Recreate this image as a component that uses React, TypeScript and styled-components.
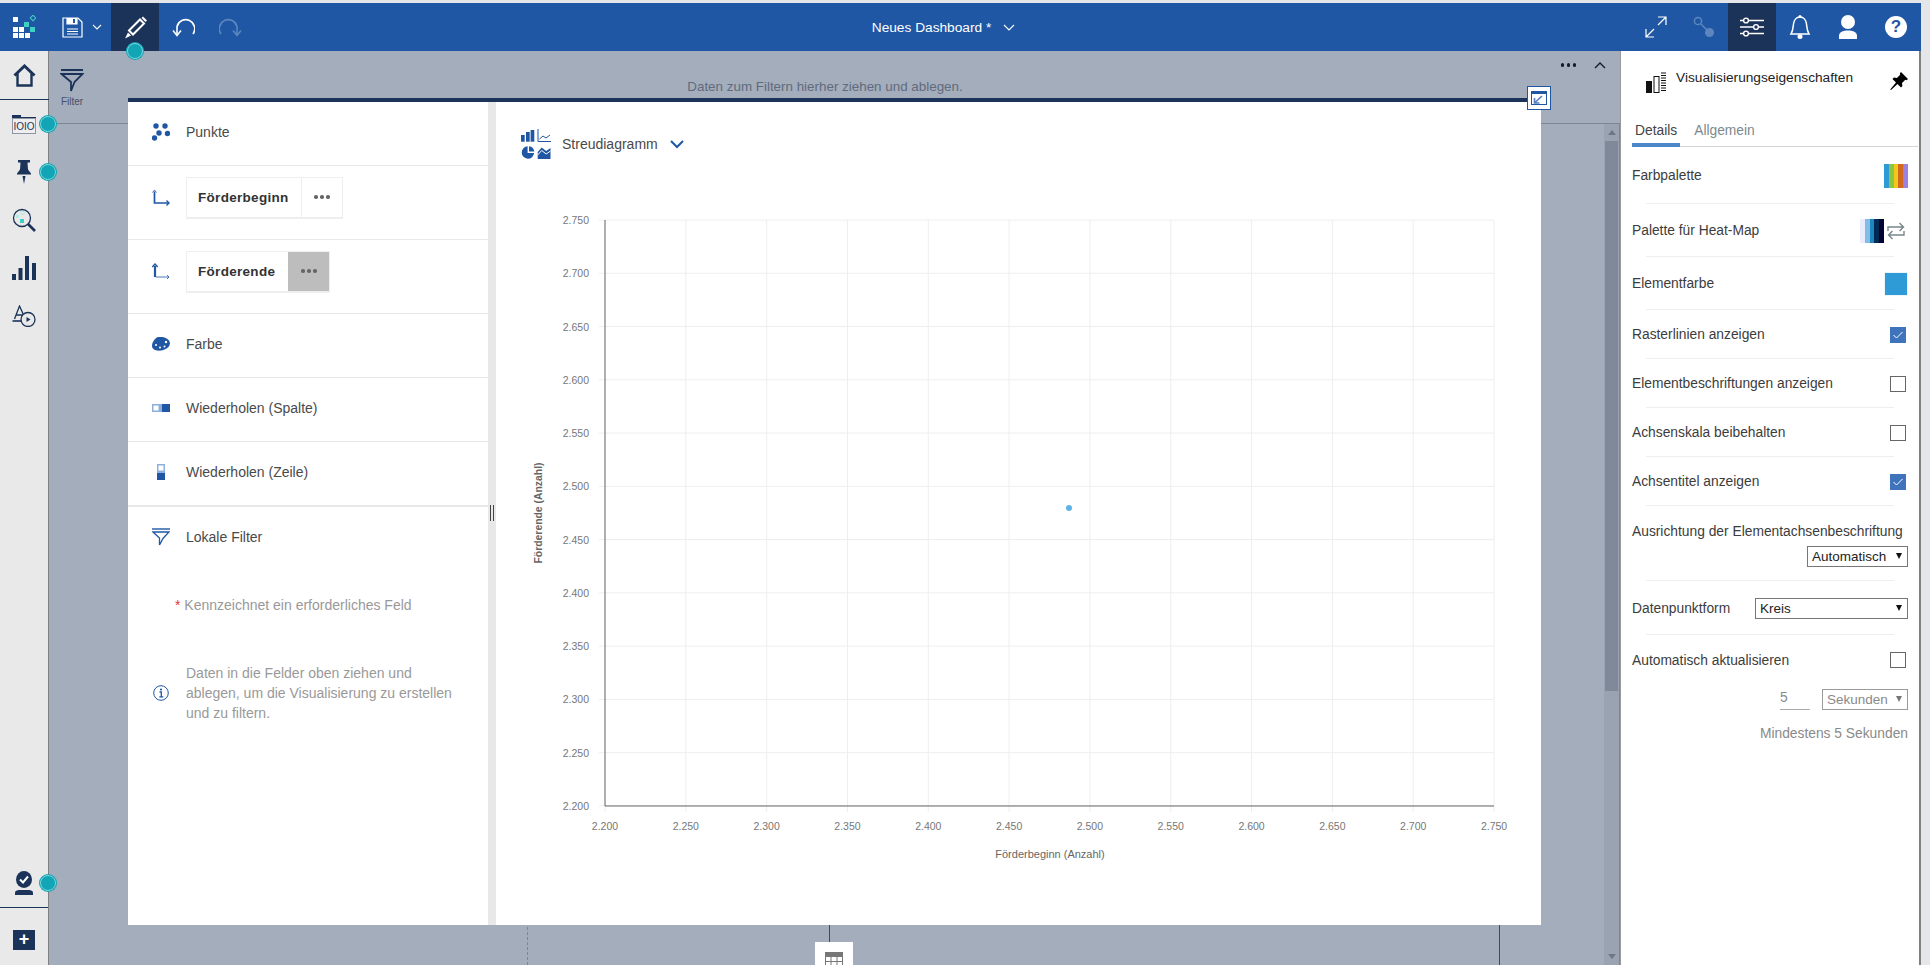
import React from 'react';
import styled, { createGlobalStyle } from 'styled-components';

const GlobalStyle = createGlobalStyle`
  html, body {
    margin: 0;
    padding: 0;
    height: 100%;
    overflow: hidden;
    background: #e9e9e9;
    font-family: 'Liberation Sans', Arial, sans-serif;
  }
  * { box-sizing: border-box; }
`;

const xTicks = ['2.200', '2.250', '2.300', '2.350', '2.400', '2.450', '2.500', '2.550', '2.600', '2.650', '2.700', '2.750'];
const yTicks = [...xTicks].reverse();

const checks = [
  { label: 'Rasterlinien anzeigen', checked: true },
  { label: 'Elementbeschriftungen anzeigen', checked: false },
  { label: 'Achsenskala beibehalten', checked: false },
  { label: 'Achsentitel anzeigen', checked: true },
];

const Chart = () => {
  const left = 109;
  const top = 34;
  const stepX = 80.82;
  const stepY = 53.27;
  const right = left + stepX * 11;
  const bottom = top + stepY * 11;
  return (
    <svg width="1045" height="684" viewBox="0 0 1045 684">
      {xTicks.map((t, i) => (
        <g key={t}>
          <line x1={left + stepX * i} x2={left + stepX * i} y1={top} y2={bottom + 6} stroke="#eeeeee" />
          <text x={left + stepX * i} y={bottom + 24} textAnchor="middle" fontSize="10.5" fill="#777">{t}</text>
        </g>
      ))}
      {yTicks.map((t, i) => (
        <g key={t}>
          <line x1={left - 6} x2={right} y1={top + stepY * i} y2={top + stepY * i} stroke="#eeeeee" />
          <text x={left - 16} y={top + stepY * i + 4} textAnchor="end" fontSize="10.5" fill="#777">{t}</text>
        </g>
      ))}
      <path d={`M${left} ${top}V${bottom}H${right}`} fill="none" stroke="#666" strokeWidth="1" />
      <circle cx="573" cy="322" r="3" fill="#5db4e6" />
      <text x="554" y="672" textAnchor="middle" fontSize="11" fill="#666">Förderbeginn (Anzahl)</text>
      <text transform="translate(46 327) rotate(-90)" textAnchor="middle" fontSize="10.4" fontWeight="700" fill="#666">Förderende (Anzahl)</text>
    </svg>
  );
};

const App = () => {
  return (
    <Page>
      <GlobalStyle />
      <Header>
        <HeaderGroup>
          <HeaderButton>
            <svg width="24" height="24" viewBox="0 0 24 24">
              <g fill="#fff"><rect x="1" y="2" width="5" height="5" /><rect x="1" y="12" width="5" height="5" /><rect x="7" y="12" width="5" height="5" /><rect x="1" y="18" width="5" height="5" /><rect x="7" y="18" width="5" height="5" /><rect x="13" y="18" width="5" height="5" /></g>
              <g fill="#3fd0c4"><rect x="12" y="7" width="5" height="5" /><rect x="18" y="12" width="5" height="5" /></g>
              <rect x="19" y="1" width="4" height="4" transform="rotate(45 21 3)" fill="none" stroke="#3fd0c4" />
            </svg>
          </HeaderButton>
          <SaveButton>
            <svg width="21" height="21" viewBox="0 0 21 21" fill="none" stroke="#fff" strokeWidth="1.2">
              <path d="M1 1h15l4 4v15H1z" />
              <path d="M5 1v6h10V1" fill="#fff" />
              <path d="M12 2v4" stroke="#1f57a4" strokeWidth="2" />
              <path d="M5 12h11M5 14.5h11M5 17h11" />
            </svg>
            <svg width="10" height="6" viewBox="0 0 10 6" fill="none" stroke="#fff" strokeWidth="1.1"><path d="M1 1l4 4 4-4" /></svg>
          </SaveButton>
          <HeaderButton $active>
            <svg width="26" height="26" viewBox="0 0 26 26" fill="#fff">
              <path d="M7 16.500L18 5.500l4 4L11 20.500z" fill="none" stroke="#fff" strokeWidth="2" />
              <path d="M19.500 4l1.500-1.500 4 4L23.500 8z" />
              <path d="M6 18.500l-3 6 6-3z" />
            </svg>
            <Dot $place="edit" />
          </HeaderButton>
          <HeaderButton>
            <svg width="24" height="24" viewBox="0 0 24 24" fill="none" stroke="#fff" strokeWidth="1.6">
              <path d="M22 19A9 9 0 1 0 6 11.5V20" />
              <path d="M2 15.5L6 20.5l4-5" />
            </svg>
          </HeaderButton>
          <HeaderButton>
            <svg width="24" height="24" viewBox="0 0 24 24" fill="none" stroke="#5d86bf" strokeWidth="1.6">
              <path d="M2 19A9 9 0 1 1 18 11.5V20" />
              <path d="M22 15.5L18 20.5l-4-5" />
            </svg>
          </HeaderButton>
        </HeaderGroup>
        <DashboardTitle>
          Neues Dashboard *
          <svg width="12" height="7" viewBox="0 0 12 7" fill="none" stroke="#fff" strokeWidth="1.2"><path d="M1 1l5 5 5-5" /></svg>
        </DashboardTitle>
        <HeaderGroupRight>
          <HeaderButton>
            <svg width="24" height="24" viewBox="0 0 24 24" fill="none" stroke="#fff" strokeWidth="1.2">
              <path d="M2 22L22 2M14 2h8v8M2 14v8h8" />
              <path d="M10 14l4-4" stroke="#1f57a4" strokeWidth="3" />
            </svg>
          </HeaderButton>
          <HeaderButton>
            <svg width="22" height="22" viewBox="0 0 22 22" fill="none" stroke="#5d86bf" strokeWidth="1.5">
              <circle cx="5" cy="5" r="3.6" />
              <path d="M8 8l6 6" />
              <circle cx="16.5" cy="16.5" r="3.8" fill="#5d86bf" />
            </svg>
          </HeaderButton>
          <HeaderButton $active>
            <svg width="24" height="20" viewBox="0 0 24 20" fill="none" stroke="#fff" strokeWidth="1.4">
              <path d="M0 3.5h24M0 10h24M0 16.500h24" />
              <g fill="#1c3359"><circle cx="6" cy="3.500" r="2.400" /><circle cx="16" cy="10" r="2.400" /><circle cx="6" cy="16.500" r="2.400" /></g>
            </svg>
          </HeaderButton>
          <HeaderButton>
            <svg width="22" height="26" viewBox="0 0 22 26" fill="none" stroke="#fff" strokeWidth="1.5">
              <path d="M2 20c2-3 2-6 2.500-10C5 6 7.500 3 11 3s6 3 6.500 7c.5 4 .5 7 2.500 10z" />
              <circle cx="11" cy="2.500" r="1.500" fill="#fff" stroke="none" />
              <circle cx="11" cy="22.500" r="2.500" fill="#fff" stroke="none" />
            </svg>
          </HeaderButton>
          <HeaderButton>
            <svg width="20" height="24" viewBox="0 0 20 24" fill="#fff">
              <circle cx="10" cy="7" r="7" />
              <path d="M1 24v-3c0-4 4-5.500 9-5.500s9 1.500 9 5.500v3z" />
            </svg>
          </HeaderButton>
          <HeaderButton>
            <HelpBadge>?</HelpBadge>
          </HeaderButton>
        </HeaderGroupRight>
      </Header>

      <Body>
        <Rail>
          <RailHome>
            <svg width="23" height="23" viewBox="0 0 23 23" fill="none" stroke="#1c3359" strokeWidth="3">
              <path d="M1.500 11.500L11.500 2l10 9.500" />
              <path d="M4.500 9.500v12h14v-12" strokeWidth="2.400" />
            </svg>
          </RailHome>
          <RailItem>
            <svg width="24" height="19" viewBox="0 0 24 19">
              <path d="M0 0h9v2h15v4H0z" fill="#1c3359" />
              <rect x="0.500" y="3.500" width="23" height="15" fill="#eee" stroke="#8d97a7" />
              <text x="12" y="15" fontSize="10" textAnchor="middle" fill="#1c3359">IOIO</text>
            </svg>
            <Dot $place="rail" />
          </RailItem>
          <RailItem>
            <svg width="16" height="24" viewBox="0 0 16 24" fill="#1c3359">
              <path d="M2 0h12v2.500h-2.500l.5 7 3 4v1H1v-1l3-4 .5-7H2z" />
              <path d="M6.500 16h3L8 24z" />
            </svg>
            <Dot $place="rail" />
          </RailItem>
          <RailItem>
            <svg width="24" height="24" viewBox="0 0 24 24" fill="none">
              <circle cx="10" cy="10" r="8.500" stroke="#1c3359" strokeWidth="1.300" />
              <path d="M16 16l7 7" stroke="#1c3359" strokeWidth="2.600" />
              <rect x="8" y="11" width="4" height="4" fill="#3fd0c4" />
              <rect x="4" y="7" width="3" height="3" fill="#b6e8e2" />
              <rect x="9" y="3.500" width="3" height="3" fill="none" stroke="#b6e8e2" />
            </svg>
          </RailItem>
          <RailItem>
            <svg width="24" height="24" viewBox="0 0 24 24" fill="#1c3359">
              <rect x="0" y="18" width="4" height="6" /><rect x="6.500" y="12" width="4" height="12" /><rect x="13" y="0" width="4" height="24" /><rect x="20" y="7" width="4" height="17" />
            </svg>
          </RailItem>
          <RailItem>
            <svg width="24" height="22" viewBox="0 0 24 22" fill="none" stroke="#1c3359" strokeWidth="1.300">
              <path d="M2.500 14L7.500 1l5 11M4.500 10h6" />
              <path d="M0.500 16h10" strokeWidth="1.600" />
              <circle cx="16" cy="14.500" r="7" fill="#e9e9e9" />
              <path d="M14.500 12l4 2.500-4 2.500z" fill="#1c3359" stroke="none" />
            </svg>
          </RailItem>
          <RailBottom>
            <RailCheck>
              <svg width="18" height="24" viewBox="0 0 18 24">
                <ellipse cx="9" cy="8.500" rx="8" ry="8.500" fill="#1c3359" />
                <path d="M5 8.500l3 3 5-6" fill="none" stroke="#fff" strokeWidth="2" />
                <path d="M0 24v-2.500C0 20 2 19 4 19h10c2 0 4 1 4 2.500V24z" fill="#1c3359" />
              </svg>
              <Dot $place="rail" />
            </RailCheck>
            <RailAdd>+</RailAdd>
          </RailBottom>
        </Rail>

        <Canvas>
          <FilterBar>
            <FilterTile>
              <svg width="24" height="23" viewBox="0 0 24 23" fill="none" stroke="#1c3359">
                <path d="M1 1h22" strokeWidth="2" />
                <path d="M1.500 5h21L14.500 13 11 22v-9z" strokeWidth="1.800" />
              </svg>
              Filter
            </FilterTile>
            <DropHint>Daten zum Filtern hierher ziehen und ablegen.</DropHint>
            <BarActions>
              <Dots $color="#111c30" />
              <svg width="12" height="7" viewBox="0 0 12 7" fill="none" stroke="#111c30" strokeWidth="1.400"><path d="M1 6l5-5 5 5" /></svg>
            </BarActions>
          </FilterBar>

          <WorkArea>
            <Sheet>
              <DashedGuide />
              <BlueGuide $left={780} />
              <BlueGuide $left={1450} />
              <TableTile>
                <svg width="18" height="20" viewBox="0 0 18 20" fill="none" stroke="#777">
                  <rect x="0.500" y="0.500" width="17" height="19" />
                  <rect x="0.500" y="0.500" width="17" height="4" fill="#777" />
                  <path d="M6 4v16M12 4v16M0 9.500h18M0 14.500h18" />
                </svg>
              </TableTile>
            </Sheet>
            <ScrollBar>
              <ScrollArrow $up />
              <ScrollThumb />
              <ScrollArrow />
            </ScrollBar>
          </WorkArea>

          <Card>
            <ConfigPanel>
              <SlotRow $height={64}>
                <SlotIcon>
                  <svg width="18" height="18" viewBox="0 0 18 18" fill="#1f57a4">
                    <circle cx="4" cy="3" r="2.700" /><circle cx="13" cy="3" r="2.700" /><circle cx="7" cy="10" r="2.700" /><circle cx="15.500" cy="10.500" r="2.700" /><circle cx="2.500" cy="15" r="2.700" />
                  </svg>
                </SlotIcon>
                Punkte
              </SlotRow>
              <SlotRow $height={74} $lift={10}>
                <SlotIcon>
                  <svg width="18" height="18" viewBox="0 0 18 18" fill="none" stroke="#1f57a4">
                    <path d="M2.500 2.500V14H17" strokeWidth="1.700" />
                    <path d="M.5 3.500l2-2.500 2 2.500" strokeWidth="0.800" />
                    <path d="M14.500 11.500L17 14l-2.500 2.500" strokeWidth="1.400" />
                  </svg>
                </SlotIcon>
                <FieldPill>
                  <FieldName $width={114}>Förderbeginn</FieldName>
                  <FieldMenu><Dots $color="#666" /></FieldMenu>
                </FieldPill>
              </SlotRow>
              <SlotRow $height={74} $lift={10}>
                <SlotIcon>
                  <svg width="18" height="18" viewBox="0 0 18 18" fill="none" stroke="#1f57a4">
                    <path d="M3 3v11" strokeWidth="2.200" />
                    <path d="M3.500 14H17" strokeWidth="0.800" />
                    <path d="M.3 4L3 1l2.700 3" strokeWidth="1.400" />
                    <path d="M15 12l2 2-2 2" strokeWidth="0.800" />
                  </svg>
                </SlotIcon>
                <FieldPill>
                  <FieldName $width={101}>Förderende</FieldName>
                  <FieldMenu $hovered><Dots $color="#666" /></FieldMenu>
                </FieldPill>
              </SlotRow>
              <SlotRow $height={64}>
                <SlotIcon>
                  <svg width="18" height="14" viewBox="0 0 18 14">
                    <path d="M6 0c4-.5 8 .5 10.500 3 2 2 1.800 5-.5 7.500-2.500 2.500-7 3.500-11 3-3-.4-5-2-5-4.500C0 5 3 1 6 0z" fill="#1f57a4" />
                    <g fill="#fff"><circle cx="4" cy="8" r="1" /><circle cx="8" cy="10.500" r="1" /><circle cx="12.500" cy="9.500" r="1" /><circle cx="14" cy="5" r="1.200" /></g>
                  </svg>
                </SlotIcon>
                Farbe
              </SlotRow>
              <SlotRow $height={64}>
                <SlotIcon>
                  <svg width="18" height="8" viewBox="0 0 18 8">
                    <rect width="18" height="8" fill="#8fb0dc" />
                    <rect x="1.500" y="1.500" width="5" height="5" fill="#fff" />
                    <rect x="10" y="0" width="8" height="8" fill="#1f57a4" />
                  </svg>
                </SlotIcon>
                Wiederholen (Spalte)
              </SlotRow>
              <SlotRow $height={65} $heavy>
                <SlotIcon>
                  <svg width="8" height="16" viewBox="0 0 8 16">
                    <rect width="8" height="16" fill="#8fb0dc" />
                    <rect x="1.500" y="1.500" width="5" height="5" fill="#fff" />
                    <rect y="9" width="8" height="7" fill="#1f57a4" />
                  </svg>
                </SlotIcon>
                Wiederholen (Zeile)
              </SlotRow>
              <FilterRow>
                <SlotIcon>
                  <svg width="18" height="18" viewBox="0 0 18 18" fill="none" stroke="#1f57a4">
                    <path d="M0 1h18" strokeWidth="1.400" />
                    <path d="M1 4h16l-6 6.500L7.500 17v-7z" strokeWidth="1.300" />
                  </svg>
                </SlotIcon>
                Lokale Filter
              </FilterRow>
              <RequiredNote><b>*</b> Kennzeichnet ein erforderliches Feld</RequiredNote>
              <InfoNote>
                <SlotIcon>
                  <svg width="16" height="16" viewBox="0 0 16 16" fill="none" stroke="#1f57a4">
                    <circle cx="8" cy="8" r="7.300" />
                    <path d="M6.500 7H8.300v4.500M6.300 11.800h4" strokeWidth="1.300" />
                    <circle cx="8" cy="4.500" r="1.100" fill="#1f57a4" stroke="none" />
                  </svg>
                </SlotIcon>
                <span>Daten in die Felder oben ziehen und ablegen, um die Visualisierung zu erstellen und zu filtern.</span>
              </InfoNote>
            </ConfigPanel>
            <Gutter><GutterGrip /></Gutter>
            <ChartPanel>
              <ChartTypeBar>
                <svg width="30" height="30" viewBox="0 0 30 30">
                  <g fill="#1f57a4">
                    <rect x="0" y="6" width="3.700" height="6.700" /><rect x="5" y="3" width="3.700" height="9.700" /><rect x="9.600" y="1" width="3.700" height="11.700" />
                    <path d="M6.600 17.300v6.700h6.500A6.200 6.200 0 1 1 6.600 17.300z" /><path d="M8 17.300A6.200 6.200 0 0 1 13.300 22.500H8z" />
                    <path d="M16.700 23l4-4.500 4.500 3.500 4.300-3V30H16.700z" />
                  </g>
                  <path d="M17 0v12.500h13M18.500 10l3.500-3 3 2 4-3" fill="none" stroke="#1f57a4" strokeWidth="1" />
                  <path d="M16.700 26l4-4.500 4.500 3.500 4.300-3" fill="none" stroke="#fff" strokeWidth="1" />
                </svg>
                <ChartTypeName>Streudiagramm</ChartTypeName>
                <svg width="14" height="9" viewBox="0 0 14 9" fill="none" stroke="#1f57a4" strokeWidth="2"><path d="M1 1l6 6 6-6" /></svg>
              </ChartTypeBar>
              <Chart />
            </ChartPanel>
          </Card>

          <RestoreButton>
            <svg width="16" height="14" viewBox="0 0 16 14">
              <rect x="0.500" y="0.500" width="15" height="13" fill="#fff" stroke="#1f57a4" />
              <rect width="16" height="3" fill="#1f57a4" />
              <path d="M11 5L4 11.500M3.500 7v5h5" fill="none" stroke="#4f7fc0" strokeWidth="1.600" />
            </svg>
          </RestoreButton>
        </Canvas>

        <Properties>
          <PropertiesHead>
            <svg width="20" height="21" viewBox="0 0 20 21">
              <rect x="0" y="9" width="6" height="12" fill="#111" />
              <rect x="8" y="4.500" width="5" height="16" fill="none" stroke="#111" />
              <path d="M15 1h5M15 3.500h5M15 6h5M15 8.500h5M15 11h5M15 13.500h5M15 16h5M15 18.500h5" stroke="#111" />
            </svg>
            <PropertiesTitle>Visualisierungseigenschaften</PropertiesTitle>
            <svg width="18" height="18" viewBox="0 0 18 18" fill="#000">
              <path d="M11 0l7 7-1.500 1.200-1.200-.4-3.300 3.300.4 3L11 15.500 7.500 12 1 18l-.8-.6L6 10.500 2.500 7l1.400-1.400 3 .4L10.200 2.700 9.800 1.500z" />
            </svg>
          </PropertiesHead>
          <Tabs>
            <Tab $active>Details</Tab>
            <Tab>Allgemein</Tab>
          </Tabs>
          <PropRow $height={57}>
            Farbpalette
            <Swatches>
              {['#2f9bd6', '#8cc63f', '#f2c81e', '#d2691e', '#9b82e0'].map((c) => <Stripe key={c} $color={c} />)}
            </Swatches>
          </PropRow>
          <PropRow $height={53}>
            Palette für Heat-Map
            <HeatGroup>
              <Swatches>
                {['#e8ecfb', '#82bde9', '#1e87c0', '#012a55', '#000433'].map((c) => <Stripe key={c} $color={c} />)}
              </Swatches>
              <svg width="18" height="18" viewBox="0 0 18 18" fill="none" stroke="#78868a" strokeWidth="1.400">
                <path d="M1 9V5h15M12.500 1L16.500 5l-4 4" />
                <path d="M17 9v4H2M5.500 9L1.500 13l4 4" />
              </svg>
            </HeatGroup>
          </PropRow>
          <PropRow $height={53}>
            Elementfarbe
            <ColorBox />
          </PropRow>
          {checks.map((c) => (
            <PropRow key={c.label} $height={49}>
              {c.label}
              <CheckBox $checked={c.checked}>
                {c.checked && (
                  <svg width="10" height="8" viewBox="0 0 10 8" fill="none" stroke="#fff"><path d="M.5 4l3 3L9.500 1" /></svg>
                )}
              </CheckBox>
            </PropRow>
          ))}
          <StackedRow $height={75}>
            Ausrichtung der Elementachsenbeschriftung
            <SelectBox $width={101}>Automatisch</SelectBox>
          </StackedRow>
          <PropRow $height={54}>
            Datenpunktform
            <SelectBox $width={153}>Kreis</SelectBox>
          </PropRow>
          <AutoRow $height={50}>
            Automatisch aktualisieren
            <CheckBox />
          </AutoRow>
          <IntervalRow>
            <IntervalInput>5</IntervalInput>
            <SelectBox $width={86} $muted>Sekunden</SelectBox>
          </IntervalRow>
          <MinNote>Mindestens 5 Sekunden</MinNote>
        </Properties>
      </Body>
    </Page>
  );
};

export default App;

const Page = styled.div`
  height: 100vh;
  padding: 3px 9px 0 0;
  display: flex;
  flex-direction: column;
  background: #e4e6ea;
  overflow: hidden;
`;

const Header = styled.header`
  height: 48px;
  flex: none;
  display: grid;
  grid-template-columns: 1fr auto 1fr;
  align-items: center;
  background: #1f57a4;
  color: #fff;
`;

const HeaderGroup = styled.div`
  display: flex;
  align-items: center;
`;

const HeaderGroupRight = styled(HeaderGroup)`
  justify-content: flex-end;
  padding-right: 1px;
`;

const HeaderButton = styled.div<{ $active?: boolean }>`
  position: relative;
  width: 48px;
  height: 48px;
  display: flex;
  align-items: center;
  justify-content: center;
  background: ${({ $active }) => ($active ? '#1c3359' : 'transparent')};
`;

const SaveButton = styled.div`
  width: 63px;
  height: 48px;
  display: flex;
  align-items: center;
  gap: 9px;
  padding-left: 14px;
`;

const DashboardTitle = styled.div`
  display: flex;
  align-items: center;
  gap: 12px;
  margin-right: 34px;
  font-size: 13.7px;
`;

const HelpBadge = styled.div`
  width: 22px;
  height: 22px;
  border-radius: 50%;
  background: #fff;
  color: #1f57a4;
  font-size: 17px;
  font-weight: 700;
  line-height: 22px;
  text-align: center;
`;

const Dot = styled.span<{ $place: 'edit' | 'rail' }>`
  position: absolute;
  z-index: 5;
  width: 16px;
  height: 16px;
  border-radius: 50%;
  background: #12a5b5;
  border: 1px solid #7bd3da;
  box-shadow: 0 0 0 1px #12a5b5;
  ${({ $place }) =>
    $place === 'edit'
      ? 'left: 16px; bottom: -8px;'
      : 'right: -8px; top: 16px;'}
`;

const Body = styled.div`
  flex: 1;
  min-height: 0;
  display: flex;
`;

const Rail = styled.nav`
  width: 49px;
  flex: none;
  display: flex;
  flex-direction: column;
  background: #e9e9e9;
  border-right: 1px solid #808080;
`;

const RailItem = styled.div`
  position: relative;
  height: 48px;
  display: flex;
  align-items: center;
  justify-content: center;
`;

const RailHome = styled(RailItem)`
  height: 49px;
  border-bottom: 1px solid #1c3359;
  margin-right: -1px;
`;

const RailBottom = styled.div`
  margin-top: auto;
`;

const RailCheck = styled(RailItem)`
  height: 49px;
  border-bottom: 1px solid #1c3359;
  margin-bottom: 22px;
`;

const RailAdd = styled.div`
  width: 22px;
  height: 20px;
  margin: 0 0 15px 13px;
  background: #1c3359;
  color: #fff;
  font-size: 18px;
  font-weight: 700;
  line-height: 19px;
  text-align: center;
`;

const Canvas = styled.main`
  position: relative;
  flex: 1;
  min-width: 0;
  display: flex;
  flex-direction: column;
  background: #a4adbb;
`;

const FilterBar = styled.div`
  height: 73px;
  flex: none;
  display: flex;
  border-bottom: 1px solid #7b8696;
`;

const FilterTile = styled.div`
  width: 46px;
  padding-top: 18px;
  display: flex;
  flex-direction: column;
  align-items: center;
  gap: 4px;
  color: #46506a;
  font-size: 10px;
`;

const DropHint = styled.div`
  flex: 1;
  margin-top: 28px;
  color: #606b7e;
  font-size: 13.4px;
  line-height: 16px;
  text-align: center;
`;

const BarActions = styled.div`
  width: 65px;
  height: 28px;
  display: flex;
  align-items: center;
  justify-content: flex-end;
  gap: 18px;
  padding-right: 14px;
`;

const Dots = styled.span<{ $color: string }>`
  display: inline-block;
  width: 3.500px;
  height: 3.500px;
  margin: 0 6px;
  border-radius: 50%;
  background: ${({ $color }) => $color};
  box-shadow: -6px 0 0 ${({ $color }) => $color}, 6px 0 0 ${({ $color }) => $color};
`;

const WorkArea = styled.div`
  flex: 1;
  min-height: 0;
  display: flex;
`;

const Sheet = styled.div`
  position: relative;
  flex: 1;
`;

const DashedGuide = styled.div`
  position: absolute;
  left: 478px;
  top: 0;
  bottom: 0;
  border-left: 1px dashed #7b8696;
`;

const BlueGuide = styled.div<{ $left: number }>`
  position: absolute;
  left: ${({ $left }) => $left}px;
  top: 0;
  bottom: 0;
  border-left: 1px solid #1f4f94;
`;

const TableTile = styled.div`
  position: absolute;
  left: 766px;
  bottom: -20px;
  width: 38px;
  height: 43px;
  padding: 10px 0 0 10px;
  background: #fff;
`;

const ScrollBar = styled.div`
  width: 16px;
  flex: none;
  display: flex;
  flex-direction: column;
  align-items: center;
  background: #9aa3b1;
  border-right: 1px solid #7b8696;
`;

const ScrollArrow = styled.div<{ $up?: boolean }>`
  height: 17px;
  flex: none;
  margin-top: ${({ $up }) => ($up ? '0' : 'auto')};
  display: flex;
  align-items: center;
  &::before {
    content: '';
    border-left: 4px solid transparent;
    border-right: 4px solid transparent;
    ${({ $up }) => ($up ? 'border-bottom' : 'border-top')}: 5px solid #6d7789;
  }
`;

const ScrollThumb = styled.div`
  width: 13px;
  height: 550px;
  background: #808999;
`;

const Card = styled.section`
  position: absolute;
  left: 79px;
  top: 47px;
  width: 1413px;
  height: 827px;
  display: flex;
  background: #fff;
  border-top: 4px solid #1c3359;
`;

const ConfigPanel = styled.div`
  width: 360px;
  flex: none;
  color: #4a4a4a;
  font-size: 14px;
`;

const SlotRow = styled.div<{ $height: number; $heavy?: boolean; $lift?: number }>`
  height: ${({ $height }) => $height}px;
  padding-bottom: ${({ $lift }) => $lift ?? 4}px;
  display: flex;
  align-items: center;
  border-bottom: ${({ $heavy }) => ($heavy ? '2px' : '1px')} solid #e8e8e8;
`;

const SlotIcon = styled.div`
  width: 58px;
  flex: none;
  padding-left: 8px;
  display: flex;
  justify-content: center;
  align-items: center;
`;

const FieldPill = styled.div`
  display: flex;
  height: 42px;
  border: 1px solid #eeeeee;
  border-bottom-width: 2px;
`;

const FieldName = styled.div<{ $width: number }>`
  width: ${({ $width }) => $width}px;
  padding-left: 11px;
  color: #333;
  font-size: 13.5px;
  font-weight: 700;
  letter-spacing: 0.3px;
  line-height: 39px;
  white-space: nowrap;
`;

const FieldMenu = styled.div<{ $hovered?: boolean }>`
  width: 41px;
  display: flex;
  align-items: center;
  justify-content: center;
  background: ${({ $hovered }) => ($hovered ? '#bdbdbd' : '#fff')};
  border-left: 1px solid ${({ $hovered }) => ($hovered ? '#bdbdbd' : '#eeeeee')};
`;

const FilterRow = styled.div`
  height: 60px;
  display: flex;
  align-items: center;
`;

const RequiredNote = styled.div`
  margin-top: 28px;
  padding-left: 47px;
  color: #999;
  font-size: 14px;
  line-height: 20px;
  white-space: nowrap;
  b {
    color: #e4353a;
    font-weight: 400;
  }
`;

const InfoNote = styled.div`
  margin-top: 48px;
  display: flex;
  align-items: center;
  padding-right: 20px;
  color: #999;
  font-size: 14px;
  line-height: 20px;
`;

const Gutter = styled.div`
  position: relative;
  width: 8px;
  flex: none;
  background: #e8e8e8;
`;

const GutterGrip = styled.div`
  position: absolute;
  left: 2px;
  top: 403px;
  width: 4px;
  height: 16px;
  border-left: 1px solid #444;
  border-right: 1px solid #444;
`;

const ChartPanel = styled.div`
  flex: 1;
  min-width: 0;
  display: flex;
  flex-direction: column;
`;

const ChartTypeBar = styled.div`
  height: 84px;
  flex: none;
  display: flex;
  align-items: center;
  padding: 0 0 0 25px;
`;

const ChartTypeName = styled.span`
  margin: 0 12px 0 11px;
  color: #4a4a4a;
  font-size: 14px;
`;

const RestoreButton = styled.div`
  position: absolute;
  left: 1478px;
  top: 35px;
  width: 24px;
  height: 24px;
  display: flex;
  align-items: center;
  justify-content: center;
  background: #fff;
  border: 1px solid #1f57a4;
`;

const Properties = styled.aside`
  width: 301px;
  flex: none;
  padding: 0 11px 0 11px;
  background: #fff;
  border-left: 1px solid #9a9a9a;
  border-right: 2px solid #808080;
  color: #3c3c3c;
  font-size: 13.8px;
`;

const PropertiesHead = styled.div`
  height: 54px;
  display: flex;
  align-items: flex-start;
  padding: 21px 0 0 14px;
`;

const PropertiesTitle = styled.div`
  flex: 1;
  margin: -2px 0 0 10px;
  color: #222;
  font-size: 13.7px;
  line-height: 16px;
`;

const Tabs = styled.div`
  height: 42px;
  margin-right: -10px;
  display: flex;
  align-items: flex-end;
  gap: 11px;
  border-bottom: 1px solid #d5d5d5;
`;

const Tab = styled.div<{ $active?: boolean }>`
  height: 26px;
  padding: 0 3px;
  margin-bottom: -1px;
  color: ${({ $active }) => ($active ? '#444' : '#7d8a8d')};
  font-size: 13.8px;
  line-height: 20px;
  border-bottom: ${({ $active }) => ($active ? '4px solid #4a86c8' : 'none')};
`;

const PropRow = styled.div<{ $height: number }>`
  position: relative;
  height: ${({ $height }) => $height}px;
  display: flex;
  align-items: center;
  justify-content: space-between;
  white-space: nowrap;
  &::after {
    content: '';
    position: absolute;
    left: 14px;
    right: 14px;
    bottom: 0;
    height: 1px;
    background: #eeeeee;
  }
`;

const StackedRow = styled(PropRow)`
  flex-direction: column;
  align-items: flex-start;
  justify-content: flex-start;
  padding-top: 18px;
  gap: 6px;
  line-height: 16px;
  > div {
    align-self: flex-end;
  }
`;

const AutoRow = styled(PropRow)`
  &::after {
    display: none;
  }
`;

const Swatches = styled.div`
  display: flex;
  width: 24px;
  height: 24px;
`;

const Stripe = styled.span<{ $color: string }>`
  flex: 1;
  background: ${({ $color }) => $color};
`;

const HeatGroup = styled.div`
  display: flex;
  align-items: center;
  gap: 3px;
  margin-right: 3px;
`;

const ColorBox = styled.div`
  width: 24px;
  height: 24px;
  background: #2f9bd6;
  border: 1px solid #eef4f8;
`;

const CheckBox = styled.div<{ $checked?: boolean }>`
  width: 16px;
  height: 16px;
  margin-right: 2px;
  display: flex;
  align-items: center;
  justify-content: center;
  background: ${({ $checked }) => ($checked ? '#3f74bd' : '#fff')};
  border: 1px solid ${({ $checked }) => ($checked ? '#3f74bd' : '#666')};
`;

const SelectBox = styled.div<{ $width: number; $muted?: boolean }>`
  position: relative;
  width: ${({ $width }) => $width}px;
  height: 21px;
  padding-left: 4px;
  background: #fff;
  border: 1px solid ${({ $muted }) => ($muted ? '#9a9a9a' : '#767676')};
  color: ${({ $muted }) => ($muted ? '#8a8a8a' : '#222')};
  font-size: 13.5px;
  line-height: 20px;
  &::after {
    content: '';
    position: absolute;
    right: 5px;
    top: 6px;
    border-left: 3px solid transparent;
    border-right: 3px solid transparent;
    border-top: 6px solid ${({ $muted }) => ($muted ? '#777' : '#111')};
  }
`;

const IntervalRow = styled.div`
  display: flex;
  justify-content: flex-end;
  align-items: flex-start;
  gap: 12px;
  margin-top: 4px;
`;

const IntervalInput = styled.div`
  width: 30px;
  height: 21px;
  color: #8a8a8a;
  font-size: 13.8px;
  line-height: 18px;
  border-bottom: 1px solid #aaa;
`;

const MinNote = styled.div`
  margin-top: 16px;
  color: #8a8a8a;
  font-size: 13.8px;
  line-height: 16px;
  text-align: right;
`;
